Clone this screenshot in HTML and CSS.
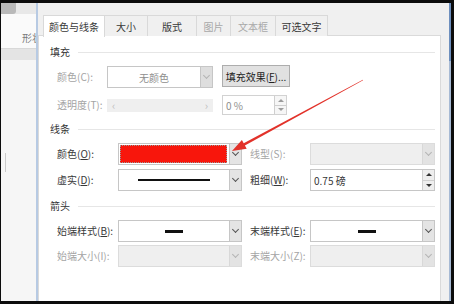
FILE: index.html
```html
<!DOCTYPE html>
<html lang="zh-CN">
<head>
    <meta charset="UTF-8">
    <meta name="viewport" content="width=device-width, initial-scale=1.0">
    <title>设置自选图形格式 - 颜色与线条</title>
    <link rel="stylesheet" href="styles.css">
</head>
<body>
<div class="screen">
    <!-- Word window behind the dialog -->
    <div class="app-strip">
        <div class="app-top"><span class="app-btn"></span></div>
        <div class="app-ribbon"><span class="app-label">形状</span></div>
        <div class="app-band"></div>
        <div class="app-doc"><span class="app-mark"></span></div>
    </div>

    <!-- Format dialog -->
    <div class="dialog">
        <div class="dialog-body">
            <div class="tabs">
                <div class="tab active">颜色与线条</div>
                <div class="tab">大小</div>
                <div class="tab">版式</div>
                <div class="tab disabled">图片</div>
                <div class="tab disabled">文本框</div>
                <div class="tab">可选文字</div>
            </div>

            <div class="panel">
                <!-- Fill -->
                <div class="section-title">填充</div>
                <div class="row row-fill">
                    <span class="lbl disabled">颜色(C):</span>
                    <div class="combo fill-combo">
                        <span class="field muted">无颜色</span>
                        <span class="drop dim"></span>
                    </div>
                    <button class="btn">填充效果(<u>F</u>)...</button>
                </div>
                <div class="row row-fill short">
                    <span class="lbl disabled">透明度(T):</span>
                    <div class="slider"><span>&lsaquo;</span><span>&rsaquo;</span></div>
                    <div class="spin spin-sm">
                        <span class="spin-text muted">0 %</span>
                        <span class="spin-btns dim"><i class="up"></i><i class="down"></i></span>
                    </div>
                </div>

                <!-- Line -->
                <div class="section-title">线条</div>
                <div class="row row-pair">
                    <span class="lbl">颜色(<u>O</u>):</span>
                    <div class="combo ctl-left">
                        <span class="field"><span class="swatch"></span></span>
                        <span class="drop"></span>
                    </div>
                    <span class="lbl lbl-right disabled">线型(S):</span>
                    <div class="combo off ctl-right">
                        <span class="field"></span>
                        <span class="drop dim"></span>
                    </div>
                </div>
                <div class="row row-pair tight">
                    <span class="lbl">虚实(<u>D</u>):</span>
                    <div class="combo ctl-left">
                        <span class="field"><i class="dash"></i></span>
                        <span class="drop"></span>
                    </div>
                    <span class="lbl lbl-right">粗细(<u>W</u>):</span>
                    <div class="spin ctl-right">
                        <span class="spin-text">0.75 磅</span>
                        <span class="spin-btns"><i class="up"></i><i class="down"></i></span>
                    </div>
                </div>

                <!-- Arrows -->
                <div class="section-title arrows">箭头</div>
                <div class="row row-pair">
                    <span class="lbl">始端样式(<u>B</u>):</span>
                    <div class="combo ctl-left">
                        <span class="field"><i class="stub"></i></span>
                        <span class="drop"></span>
                    </div>
                    <span class="lbl lbl-right">末端样式(<u>E</u>):</span>
                    <div class="combo ctl-right">
                        <span class="field"><i class="stub"></i></span>
                        <span class="drop"></span>
                    </div>
                </div>
                <div class="row row-pair tighter">
                    <span class="lbl disabled">始端大小(I):</span>
                    <div class="combo off ctl-left">
                        <span class="field"></span>
                        <span class="drop dim"></span>
                    </div>
                    <span class="lbl lbl-right disabled">末端大小(Z):</span>
                    <div class="combo off ctl-right">
                        <span class="field"></span>
                        <span class="drop dim"></span>
                    </div>
                </div>
            </div>
        </div>
        <div class="dialog-edge"></div>
    </div>
</div>

<!-- red annotation arrow drawn over the dialog -->
<svg class="annotation" width="454" height="304" viewBox="0 0 454 304">
    <polygon fill="#e2322a" points="232,151 246.7,148.7 244.9,145.4 363.1,80.3 362.9,79.7 243.7,143.2 241.9,139.9"/>
</svg>
</body>
</html>
```

FILE: styles.css
```css
* {
    box-sizing: border-box;
}
html, body {
    margin: 0;
    padding: 0;
}
body {
    position: relative;
    width: 454px;
    height: 304px;
    overflow: hidden;
    background-color: #0c0c0c;
    font-family: "Noto Sans CJK SC", "Noto Sans", sans-serif;
    font-size: 10px;
    color: #383838;
}
.screen {
    display: flex;
    height: 304px;
    padding: 3px 3px 3px 1px;
}

/* window behind */
.app-strip {
    width: 35px;
    display: flex;
    flex-direction: column;
    background-color: #f6f6f6;
    overflow: hidden;
}
.app-top {
    height: 11px;
    display: flex;
    background-color: #e8e8e8;
}
.app-btn {
    width: 15px;
    height: 11px;
    background-color: #b9b9b9;
    border-radius: 0 0 3px 0;
}
.app-ribbon {
    height: 34px;
    display: flex;
    align-items: flex-end;
    padding: 0 0 3px 21px;
    background-color: #fafafa;
    white-space: nowrap;
}
.app-label {
    color: #7a7a7a;
    line-height: 14px;
}
.app-band {
    height: 12px;
    background-color: #e4e4e4;
    border-top: 1px solid #d8d8d8;
}
.app-doc {
    flex: 1;
    padding: 93px 0 0 4px;
}
.app-mark {
    display: block;
    width: 1px;
    height: 19px;
    background-color: #cacaca;
}

/* dialog */
.dialog {
    flex: 1;
    display: flex;
    border-left: 2px solid #b7cae3;
}
.dialog-body {
    flex: 1;
    display: flex;
    flex-direction: column;
    background-color: #f0f0f0;
    padding: 12px 8px 0 0;
}
.dialog-edge {
    width: 2px;
    background: linear-gradient(#6d8fbe 0 58px, #a7bad4 58px);
}

.tabs {
    display: flex;
    height: 21px;
    margin-left: 5px;
    margin-bottom: -1px;
    position: relative;
    z-index: 1;
}
.tab {
    display: flex;
    align-items: center;
    justify-content: center;
    height: 21px;
    border: 1px solid #d9d9d9;
    border-left: none;
    border-bottom: none;
    background-color: #f0f0f0;
    white-space: nowrap;
}
.tab:first-child {
    border-left: 1px solid #d9d9d9;
}
.tab:nth-child(1) { width: 62px; }
.tab:nth-child(2) { width: 43px; }
.tab:nth-child(3) { width: 49px; }
.tab:nth-child(4) { width: 34px; }
.tab:nth-child(5) { width: 45px; }
.tab:nth-child(6) { width: 52px; }
.tab.active {
    height: 22px;
    background-color: #fff;
}
.tab.disabled {
    color: #a8a8a8;
}

.panel {
    flex: 1;
    background-color: #fff;
    border: 1px solid #dadada;
    border-bottom: none;
    padding: 9px 5px 0 11px;
}
.section-title {
    display: flex;
    align-items: center;
    height: 14px;
    line-height: 14px;
    color: #333;
    margin-top: 7px;
}
.section-title:first-child {
    margin-top: 0;
}
.section-title.arrows {
    margin-top: 8px;
}
.section-title::after {
    content: "";
    flex: 1;
    margin-left: 8px;
    border-top: 1px solid #e6e6e6;
}

.row {
    display: flex;
    align-items: center;
    height: 22px;
    margin: 7px 0 0 7px;
}
.row.short {
    height: 20px;
}
.row.tight {
    margin-top: 4px;
}
.row.tighter {
    margin-top: 3px;
}
.lbl {
    white-space: nowrap;
    line-height: 14px;
}
.lbl.disabled {
    color: #a4a4a4;
}
.row-fill .lbl {
    width: 50px;
}
.row-pair .lbl {
    width: 61px;
}
.row-pair .lbl-right {
    width: 68px;
    padding-left: 8px;
}
.ctl-left {
    width: 124px;
}
.ctl-right {
    width: 125px;
}
.muted {
    color: #8e8e8e;
}

/* combo boxes */
.combo {
    display: flex;
    height: 22px;
    border: 1px solid #c6c6c6;
    background-color: #fff;
}
.combo .field {
    flex: 1;
    display: flex;
    align-items: center;
    justify-content: center;
}
.fill-combo {
    width: 106px;
}
.drop {
    width: 12px;
    display: flex;
    align-items: center;
    justify-content: center;
    background-color: #e4e4e4;
    border-left: 1px solid #c6c6c6;
}
.drop::after {
    content: "";
    width: 4px;
    height: 4px;
    margin-top: -3px;
    border-right: 1px solid #555;
    border-bottom: 1px solid #555;
    transform: rotate(45deg);
}
.drop.dim {
    background-color: #dedede;
}
.drop.dim::after {
    border-color: #b4b4b4;
}
.combo.off {
    background-color: #efefef;
    border-color: #dcdcdc;
}
.combo.off .drop {
    background-color: #e3e3e3;
    border-left-color: #d8d8d8;
}
.swatch {
    align-self: stretch;
    flex: 1;
    margin: 1px 2px 1px 1px;
    border: 1px dotted #9a9a9a;
    background-color: #f8160c;
}
.dash {
    display: block;
    width: 72px;
    height: 2px;
    background-color: #111;
}
.stub {
    display: block;
    width: 18px;
    height: 3px;
    background-color: #111;
}

.btn {
    width: 68px;
    height: 22px;
    margin: -2px 0 0 9px;
    padding: 0;
    border: 1px solid #adadad;
    background-color: #e1e1e1;
    font: inherit;
    color: #222;
    white-space: nowrap;
}

.slider {
    width: 106px;
    height: 13px;
    display: flex;
    justify-content: space-between;
    align-items: center;
    padding: 0 5px;
    background-color: #efefef;
    color: #bdbdbd;
    font-size: 11px;
    line-height: 13px;
}

/* spinners */
.spin {
    display: flex;
    height: 22px;
    border: 1px solid #c6c6c6;
    background-color: #fff;
}
.spin-sm {
    width: 65px;
    height: 20px;
    margin-left: 9px;
    border-color: #d2d2d2;
}
.spin-text {
    flex: 1;
    display: flex;
    align-items: center;
    padding-left: 3px;
    white-space: nowrap;
}
.spin-btns {
    width: 12px;
    display: flex;
    flex-direction: column;
    border-left: 1px solid #cfcfcf;
}
.spin-btns i {
    flex: 1;
    display: flex;
    align-items: center;
    justify-content: center;
    background-color: #eeeeee;
}
.spin-btns i + i {
    border-top: 1px solid #cfcfcf;
}
.spin-btns i::after {
    content: "";
    border-left: 3px solid transparent;
    border-right: 3px solid transparent;
}
.spin-btns .up::after {
    border-bottom: 3px solid #333;
}
.spin-btns .down::after {
    border-top: 3px solid #333;
}
.spin-btns.dim i {
    background-color: #f6f6f6;
}
.spin-btns.dim .up::after {
    border-bottom-color: #9c9c9c;
}
.spin-btns.dim .down::after {
    border-top-color: #9c9c9c;
}

.annotation {
    position: absolute;
    top: 0;
    left: 0;
    pointer-events: none;
}
```
